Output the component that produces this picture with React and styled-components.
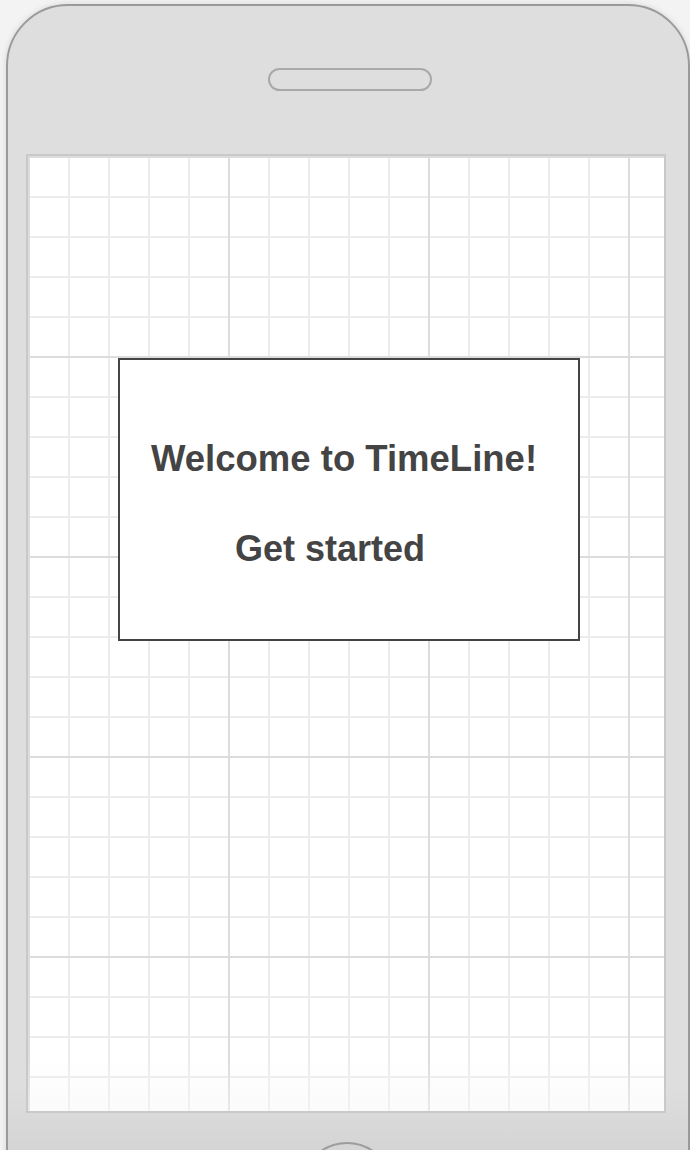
import React from 'react'
import styled, { createGlobalStyle } from 'styled-components'

const GlobalStyle = createGlobalStyle`
  html, body {
    margin: 0;
    padding: 0;
    height: 100%;
    overflow: hidden;
    background: #f3f3f3;
    font-family: "Liberation Sans", Arial, Helvetica, sans-serif;
  }
`

function App() {
  return (
    <>
      <GlobalStyle />
      <Page>
        <Phone>
          <Speaker />
          <Screen>
            <Dialog>
              <Heading>Welcome to TimeLine!</Heading>
              <StartLink href="#">Get started</StartLink>
            </Dialog>
          </Screen>
          <HomeButton />
        </Phone>
      </Page>
    </>
  )
}

export default App

const Page = styled.div`
  padding: 4px 0 0 6px;
  height: 1150px;
  box-sizing: border-box;
  overflow: hidden;
`

const Phone = styled.div`
  width: 684px;
  height: 1300px;
  box-sizing: border-box;
  border: 2px solid #9a9a9a;
  border-radius: 62px 62px 0 0;
  background: linear-gradient(to bottom, #dedede 0px, #dedede 1080px, #d2d2d2 1160px);
  box-shadow: 0 0 6px rgba(0, 0, 0, 0.12);
  display: flex;
  flex-direction: column;
  align-items: flex-start;
`

const Speaker = styled.div`
  width: 164px;
  height: 23px;
  box-sizing: border-box;
  margin: 62px 0 0 260px;
  border: 2px solid #a9a9a9;
  border-radius: 12px;
`

const Screen = styled.div`
  width: 640px;
  height: 959px;
  box-sizing: border-box;
  margin: 63px 0 0 18px;
  padding: 202px 0 0 90px;
  border: 2px solid #c9c9c9;
  background-color: #fff;
  background-image:
    linear-gradient(to bottom, rgba(255, 255, 255, 0) 900px, rgba(247, 247, 247, 0.5) 955px),
    linear-gradient(to left, #dcdcdc 2px, transparent 2px),
    linear-gradient(to top, #dcdcdc 2px, transparent 2px),
    linear-gradient(to left, #ececec 2px, transparent 2px),
    linear-gradient(to top, #ececec 2px, transparent 2px);
  background-size: 100% 100%, 200px 200px, 200px 200px, 40px 40px, 40px 40px;
  background-position: 0 0, 2px 2px, 2px 2px, 2px 2px, 2px 2px;
`

const Dialog = styled.div`
  width: 462px;
  height: 283px;
  box-sizing: border-box;
  border: 2px solid #444;
  background: #fff;
  display: flex;
  flex-direction: column;
  align-items: flex-start;
  padding-top: 78px;
`

const Heading = styled.h1`
  margin: 0 0 0 31px;
  font-size: 36.5px;
  line-height: 42px;
  font-weight: 700;
  color: #444;
  white-space: nowrap;
`

const StartLink = styled.a`
  margin: 48px 0 0 115px;
  font-size: 36px;
  line-height: 42px;
  font-weight: 700;
  color: #444;
  text-decoration: none;
  white-space: nowrap;
`

const HomeButton = styled.div`
  width: 92px;
  height: 92px;
  box-sizing: border-box;
  margin: 29px 0 0 293px;
  border: 2px solid #9d9d9d;
  border-radius: 50%;
  flex-shrink: 0;
`
